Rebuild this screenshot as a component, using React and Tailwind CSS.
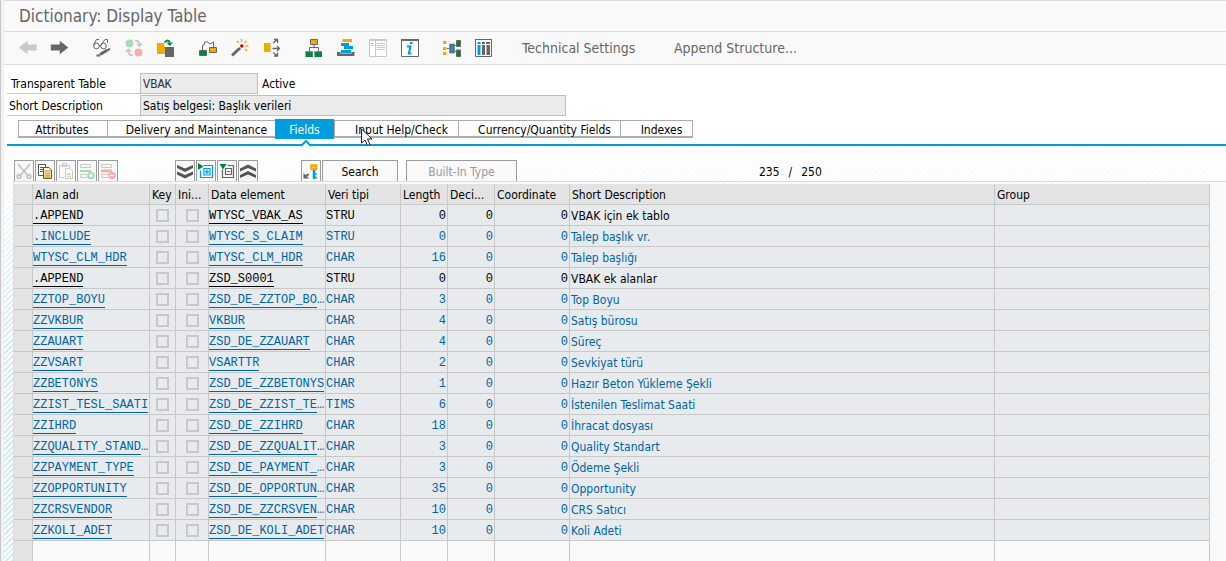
// App.jsx
import React from 'react';

const tabs = [
    { label: 'Attributes', width: 'w-[89px] pr-[2px]' },
    { label: 'Delivery and Maintenance', width: 'w-[168px] pl-[10px]' },
    { label: 'Fields', width: 'w-[59px]', active: true },
    { label: 'Input Help/Check', width: 'w-[124px] pl-[10px]' },
    { label: 'Currency/Quantity Fields', width: 'w-[162px] pl-[10px]' },
    { label: 'Indexes', width: 'w-[73px] pl-[10px]' },
];

const columns = [
    { label: '', width: 'w-[19px]' },
    { label: 'Alan adı', width: 'w-[117px]' },
    { label: 'Key', width: 'w-[26px]' },
    { label: 'Ini...', width: 'w-[33px]' },
    { label: 'Data element', width: 'w-[117px]' },
    { label: 'Veri tipi', width: 'w-[75px]' },
    { label: 'Length', width: 'w-[47px]' },
    { label: 'Deci...', width: 'w-[47px]' },
    { label: 'Coordinate', width: 'w-[75px]' },
    { label: 'Short Description', width: 'w-auto' },
    { label: 'Group', width: 'w-[215px]' },
];

// A trailing "…" marks a value that is cut off in its column
const rows = [
    { name: '.APPEND', element: 'WTYSC_VBAK_AS', type: 'STRU', length: 0, text: 'VBAK için ek tablo', black: true },
    { name: '.INCLUDE', element: 'WTYSC_S_CLAIM', type: 'STRU', length: 0, text: 'Talep başlık vr.' },
    { name: 'WTYSC_CLM_HDR', element: 'WTYSC_CLM_HDR', type: 'CHAR', length: 16, text: 'Talep başlığı' },
    { name: '.APPEND', element: 'ZSD_S0001', type: 'STRU', length: 0, text: 'VBAK ek alanlar', black: true },
    { name: 'ZZTOP_BOYU', element: 'ZSD_DE_ZZTOP_BO…', type: 'CHAR', length: 3, text: 'Top Boyu' },
    { name: 'ZZVKBUR', element: 'VKBUR', type: 'CHAR', length: 4, text: 'Satış bürosu' },
    { name: 'ZZAUART', element: 'ZSD_DE_ZZAUART', type: 'CHAR', length: 4, text: 'Süreç' },
    { name: 'ZZVSART', element: 'VSARTTR', type: 'CHAR', length: 2, text: 'Sevkiyat türü' },
    { name: 'ZZBETONYS', element: 'ZSD_DE_ZZBETONYS', type: 'CHAR', length: 1, text: 'Hazır Beton Yükleme Şekli' },
    { name: 'ZZIST_TESL_SAATI', element: 'ZSD_DE_ZZIST_TE…', type: 'TIMS', length: 6, text: 'İstenilen Teslimat Saati' },
    { name: 'ZZIHRD', element: 'ZSD_DE_ZZIHRD', type: 'CHAR', length: 18, text: 'İhracat dosyası' },
    { name: 'ZZQUALITY_STAND…', element: 'ZSD_DE_ZZQUALIT…', type: 'CHAR', length: 3, text: 'Quality Standart' },
    { name: 'ZZPAYMENT_TYPE', element: 'ZSD_DE_PAYMENT_…', type: 'CHAR', length: 3, text: 'Ödeme Şekli' },
    { name: 'ZZOPPORTUNITY', element: 'ZSD_DE_OPPORTUN…', type: 'CHAR', length: 35, text: 'Opportunity' },
    { name: 'ZZCRSVENDOR', element: 'ZSD_DE_ZZCRSVEN…', type: 'CHAR', length: 10, text: 'CRS Satıcı' },
    { name: 'ZZKOLI_ADET', element: 'ZSD_DE_KOLI_ADET', type: 'CHAR', length: 10, text: 'Koli Adeti' },
];

// Icons of the application toolbar, all on a 20x20 grid
const toolbarGroups = [
    [
        { title: 'Back', art: <path fill="#c9c9c9" d="M1 9.5 9.5 2.7V6.5H18.7V12.5H9.5V16.3z" /> },
        { title: 'Forward', art: <path fill="#666" d="M18.3 9.5 9.8 2.7V6.5H.8V12.5H9.8V16.3z" /> },
    ],
    [
        {
            title: 'Display / Change',
            art: (
                <g fill="none" stroke="#666">
                    <circle cx="4.5" cy="8" r="2.8" />
                    <circle cx="11.5" cy="8" r="2.8" />
                    <path d="M1.5 7 4.5 1.5H7M9 7 13 1.5H15.5V5M7.3 7.5H8.7" />
                    <path strokeWidth="3" d="M8 16.5 15.5 12" />
                    <path strokeWidth="2" d="M4.5 17.5H8M15.5 12.5 18 10.5" />
                </g>
            ),
        },
        {
            title: 'Active / Inactive',
            art: (
                <>
                    <circle cx="5.5" cy="5.5" r="4" fill="#a9d8ba" />
                    <circle cx="14.5" cy="14.5" r="4" fill="#eeb0b0" />
                    <path fill="none" stroke="#c9c9c9" strokeWidth="2" d="M11 2.8Q16 2.5 15.5 7M9 17.2Q4 17.5 4.5 13" />
                    <path fill="#c9c9c9" d="M12 5.5H19L15.5 9.5zM1 14H8L4.5 10z" />
                </>
            ),
        },
        {
            title: 'Other Object',
            art: (
                <>
                    <path fill="#f0ab00" d="M1 5H8V8H9V16H1z" />
                    <path fill="#666" d="M9 9H18V19H9z" />
                    <path fill="none" stroke="#00873c" strokeWidth="2" d="M8.5 4.5Q11 1 14 4" />
                    <path fill="#00873c" d="M10.5 4.5H17L13.7 8z" />
                </>
            ),
        },
    ],
    [
        {
            title: 'Where-Used List',
            art: (
                <g stroke="#666">
                    <path fill="none" d="M4.5 12V7.5L6.5 6.5V4.5L9 3.5 12 6 15.5 4V9.5" />
                    <path fill="#00873c" d="M1.5 12.5H8.5V17.5H1.5z" />
                    <path fill="#f0ab00" d="M11.5 9.5H18.5V14.5H11.5z" />
                </g>
            ),
        },
        {
            title: 'Activate',
            art: (
                <>
                    <path stroke="#666" strokeWidth="3" d="M2 17.5 10 10" />
                    <circle cx="11.8" cy="8" r="1.8" fill="#d00" />
                    <path stroke="#f0ab00" strokeWidth="1.4" d="M7 3 8.5 5M11.5 1V4M16.5 3 14.5 5M15.5 8H18.5M15 11 17 13" />
                </>
            ),
        },
        {
            title: 'Expand',
            art: (
                <>
                    <path fill="#f0ab00" d="M2 5H8.5V14H2z" />
                    <g fill="none" stroke="#666" strokeWidth="1.3">
                        <path d="M11 5 15 1.8M12 1.5H15.5V5M10.5 10.5H17M15 8 17.5 10.5 15 13M11 14.5 15 17.5M12 18H15.5V14.5" />
                    </g>
                </>
            ),
        },
    ],
    [
        {
            title: 'Hierarchy',
            art: (
                <>
                    <path fill="none" stroke="#666" d="M5.5 13V9.5H14.5V13M10 6V9.5" />
                    <path fill="#f0ab00" stroke="#666" d="M6.5 1.5H13.5V6.5H6.5z" />
                    <path fill="#00873c" d="M1.5 13.5H8.8V19H1.5zM10.5 13.5H18V19H10.5z" />
                    <path stroke="#666" d="M1.5 14H8.8M10.5 14H18" />
                </>
            ),
        },
        {
            title: 'Display Object List',
            art: (
                <>
                    <path fill="#f0ab00" d="M6.5 1H16V4H6.5z" />
                    <path fill="#009de0" d="M5 5H13V8H5zM8 8H17V11H8zM5 12H15V15H5z" />
                    <path fill="#666" d="M1 14H4.5V15.5H15.5V14H18.5V18H1z" />
                </>
            ),
        },
        {
            title: 'Layout',
            art: (
                <g fill="none" stroke="#c9c9c9">
                    <path fill="#fff" d="M1.5 2.5H18.5V18.5H1.5z" />
                    <path strokeWidth="2" d="M1 2H19" />
                    <path d="M7.5 3V18M3 5.5H6M3 7.5H6M9 5.5H17M9 7.5H17M9 9.5H17M9 11.5H17" />
                </g>
            ),
        },
        {
            title: 'Information',
            art: (
                <>
                    <path fill="#fff" stroke="#666" d="M1.5 2.5H18.5V18.5H1.5z" />
                    <path stroke="#666" strokeWidth="2" d="M1 2H19" />
                    <path fill="none" stroke="#009de0" strokeWidth="2" d="M7 8.5H10.5L8.8 15.5H11.5M10 5H12.5" />
                </>
            ),
        },
    ],
    [
        {
            title: 'Append',
            art: (
                <>
                    <path fill="#f0ab00" d="M1 3H4.5V6H1zM1 9H4.5V12H1zM1 14H4.5V17H1z" />
                    <path fill="#009de0" stroke="#666" strokeWidth="1.5" d="M8 6.5H12V14.5H8z" />
                    <path stroke="#666" d="M5 10.5H7M13 7.5H15M13 13.5H15" />
                    <path fill="#00873c" stroke="#666" d="M14.5 2.5H18.5V8.5H14.5zM14.5 12H18.5V18.5H14.5z" />
                </>
            ),
        },
        {
            title: 'Contents',
            art: (
                <>
                    <path fill="#fff" stroke="#666" d="M1.5 1.5H17.5V18.5H1.5z" />
                    <path fill="#666" d="M1 1H18V2H1zM8 4H11V6H8zM12 4H16V6H12zM8 7H11V17H8zM12.5 7H16V17H12.5z" />
                    <path fill="#009de0" d="M3.5 4H6.5V6H3.5zM3.5 7H6.5V17H3.5z" />
                </>
            ),
        },
    ],
];

// Icons of the grid toolbar, 18x20
const editButtons = [
    {
        title: 'Cut',
        art: (
            <g fill="none" stroke="#c4c4c4" strokeWidth="1.8">
                <path d="M3 3 13 15M15 3 5 15" />
                <circle cx="4" cy="15.5" r="1.8" />
                <circle cx="14" cy="15.5" r="1.8" />
            </g>
        ),
    },
    {
        title: 'Copy',
        art: (
            <>
                <path fill="#fff" stroke="#555" d="M2.5 3.5H9.5V14.5H2.5z" />
                <path stroke="#555" d="M4 6.5H8M4 8.5H8M4 10.5H8" />
                <path fill="#fff" stroke="#555" d="M7.5 6.5H13L15.5 9V17.5H7.5z" />
                <path stroke="#f0ab00" strokeWidth="1.6" d="M8.5 10H14.5M8.5 12.2H14.5M8.5 14.4H14.5M8.5 16.4H14.5" />
            </>
        ),
    },
    {
        title: 'Paste',
        art: (
            <g fill="none" stroke="#c9c9c9">
                <path d="M7 16.5H2.5V4.5H12.5V7M5.5 5.5V2.5H9.5V5.5z" />
                <path fill="#fff" d="M8.5 7.5H13L15.5 10V17.5H8.5z" />
                <path stroke="#f3d89a" strokeWidth="2" d="M10 13H14M10 15.5H14" />
            </g>
        ),
    },
    {
        title: 'Insert Row',
        art: (
            <>
                <path fill="none" stroke="#c9c9c9" d="M2.5 3.5H12.5V6.5H2.5zM9 16.5H2.5V13.5H9" />
                <path stroke="#a9d8ba" strokeWidth="2" d="M2 10H13" />
                <circle cx="13" cy="14.5" r="3.8" fill="#a9d8ba" />
                <path stroke="#fff" strokeWidth="1.3" d="M11 14.5H15M13 12.5V16.5" />
            </>
        ),
    },
    {
        title: 'Delete Row',
        art: (
            <>
                <path fill="none" stroke="#c9c9c9" d="M2.5 3.5H12.5V6.5H2.5zM9 16.5H2.5V13.5H9" />
                <path stroke="#eeb0b0" strokeWidth="3" d="M2 10H13" />
                <circle cx="13" cy="14.5" r="3.8" fill="#eeb0b0" />
                <path stroke="#fff" strokeWidth="1.3" d="M11 14.5H15" />
            </>
        ),
    },
];

const expandButtons = [
    { title: 'Expand All', art: <path fill="#555" d="M1 4 9 7.5 17 4V7L9 11 1 7zM1 10.5 9 14 17 10.5V13.5L9 17.5 1 13.5z" /> },
    {
        title: 'Expand Include',
        art: (
            <>
                <path fill="none" stroke="#009de0" strokeWidth="1.2" d="M6.5 4.5H15.5V16.5H3.5V9.5M7 7.5V14H13V7.5zM10 8.5V13M8 10.8H12" />
                <path fill="#00873c" d="M1 2 6.5 5.5 1 9z" />
            </>
        ),
    },
    {
        title: 'Collapse Include',
        art: (
            <>
                <path fill="none" stroke="#666" strokeWidth="1.2" d="M9.5 4.5H15.5V16.5H4.5V8.5M7.5 7.5H13.5V13.5H7.5zM9 10.5H12" />
                <path fill="#00873c" d="M1.5 3H8.5L5 8.5z" />
            </>
        ),
    },
    { title: 'Collapse All', art: <path fill="#555" d="M1 17 9 13.5 17 17V14L9 10 1 14zM1 10.5 9 7 17 10.5V7.5L9 3.5 1 7.5z" /> },
];

const ToolbarIcon = ({ title, art }) => (
    <button type="button" aria-label={title} className="h-5 w-5">
        <svg viewBox="0 0 20 20" className="h-5 w-5">{art}</svg>
    </button>
);

const GridButton = ({ title, art }) => (
    <button type="button" aria-label={title} className="h-[21px] w-5 border border-b-0 border-[#9c9c9c] bg-[#f9f9f9]">
        <svg viewBox="0 0 18 20" className="h-5 w-[18px]">{art}</svg>
    </button>
);

const FieldLink = ({ value }) => {
    const cut = value.endsWith('…');
    return (
        <>
            <a href="#field" className="inline-block h-4 border-b border-current">{cut ? value.slice(0, -1) : value}</a>
            {cut && '…'}
        </>
    );
};

const Cell = ({ className = '', children }) => (
    <td className={`overflow-hidden border-r border-b border-[#c8c8c8] p-0 ${className}`}>{children}</td>
);

const MonoCell = ({ className = '', children }) => (
    <Cell className={`pt-[2px] font-['Liberation_Mono',monospace] ${className}`}>{children}</Cell>
);

const FlagCell = ({ label }) => (
    <Cell>
        <input type="checkbox" disabled aria-label={label} className="mx-auto block size-[13px] appearance-none border-2 border-[#c8c8c8]" />
    </Cell>
);

const FieldRow = ({ row }) => (
    <tr className={`h-[21px] bg-[#e7ebee] ${row.black ? 'text-black' : 'text-[#0064a4]'}`}>
        <Cell className="bg-[#e3e3e3]" />
        <MonoCell><FieldLink value={row.name} /></MonoCell>
        <FlagCell label="Key" />
        <FlagCell label="Initial values" />
        <MonoCell><FieldLink value={row.element} /></MonoCell>
        <MonoCell>{row.type}</MonoCell>
        <MonoCell className="pr-px text-right">{row.length}</MonoCell>
        <MonoCell className="pr-px text-right">0</MonoCell>
        <MonoCell className="pr-px text-right">0</MonoCell>
        <Cell className="pt-[2px] pl-px">{row.text}</Cell>
        <Cell />
    </tr>
);

const App = () => {
    return (
        <div className="flex min-h-screen bg-[#f2f2f2] font-['DejaVu_Sans_Condensed','Noto_Sans',sans-serif] text-xs leading-4 text-black">
            <div className="w-1 shrink-0 border-l border-[#c8c8c8]" />
            <div className="min-w-0 flex-1 bg-white">
                {/* Title */}
                <header className="flex h-8 items-center border-y border-[#dcdcdc] bg-[#f9f9f9] pl-[15px]">
                    <h1 className="text-[17px] text-[#666]">Dictionary: Display Table</h1>
                </header>

                {/* Application toolbar */}
                <nav className="flex h-[33px] items-center border-b border-[#dcdcdc] bg-[#f9f9f9] pl-[14px] text-sm text-[#666]">
                    <div className="flex gap-[22px]">
                        {toolbarGroups.map((group, i) => (
                            <div key={i} className="flex gap-3">
                                {group.map((icon) => <ToolbarIcon key={icon.title} {...icon} />)}
                            </div>
                        ))}
                    </div>
                    <button type="button" className="ml-7 w-[110px] text-left whitespace-nowrap">Technical Settings</button>
                    <button type="button" className="ml-[42px] whitespace-nowrap">Append Structure...</button>
                </nav>

                {/* Table name and description */}
                <div className="flex flex-col gap-px pt-2 pl-[3px]">
                    <div className="flex h-[21px] items-center">
                        <label htmlFor="table-name" className="h-full w-[133px] border-b border-[#c8c8c8] pt-[3px] pl-1">Transparent Table</label>
                        <input id="table-name" readOnly value="VBAK" className="h-[21px] w-[118px] border border-[#bdbdbd] bg-[#ebebeb] px-[2px] pt-[2px] font-['Liberation_Mono',monospace] text-[#333]" />
                        <span className="pl-1">Active</span>
                    </div>
                    <div className="flex h-[21px] items-center">
                        <label htmlFor="table-text" className="h-full w-[133px] border-b border-[#c8c8c8] pt-[3px] pl-[2px]">Short Description</label>
                        <input id="table-text" readOnly value="Satış belgesi: Başlık verileri" className="h-[21px] w-[426px] border border-[#bdbdbd] bg-[#ebebeb] px-[2px]" />
                    </div>
                </div>

                {/* Tab strip */}
                <div className="relative ml-[3px] flex h-[30px] border-b-2 border-[#009de0] pt-[3px] pl-[11px]">
                    <div role="tablist" className="flex h-5 items-center">
                        {tabs.map((tab) => (
                            <button
                                key={tab.label}
                                type="button"
                                role="tab"
                                aria-selected={!!tab.active}
                                className={`relative whitespace-nowrap ${tab.width} ${tab.active
                                    ? 'h-5 bg-[#009de0] pt-[2px] text-white'
                                    : 'h-[18px] border border-r-0 border-b-2 border-[#adadad] bg-white pt-px last:border-r'}`}
                            >
                                {tab.label}
                                {tab.active && (
                                    <svg viewBox="0 0 12 7" className="absolute top-[21px] left-[25px] h-[7px] w-3">
                                        <path fill="#fff" stroke="#009de0" strokeWidth="2" d="M1 6 6 1 11 6" />
                                    </svg>
                                )}
                            </button>
                        ))}
                    </div>
                    {/* Mouse pointer */}
                    <svg viewBox="0 0 12 19" className="absolute top-[12px] left-[354px] h-[19px] w-3">
                        <path fill="#fff" stroke="#222" d="M.5 1V15L4 12 6.5 17.5 9 16.5 6.5 11H11z" />
                    </svg>
                </div>

                {/* Grid area with the striped background */}
                <div className="bg-[linear-gradient(to_bottom,#fff,#ffffff00_50%),repeating-linear-gradient(135deg,#fff_0px,#fff_2px,#d5eaf5_2px,#d5eaf5_4px)] pt-[14px]">
                    <div className="flex h-[21px] pl-[10px]">
                        <div className="flex gap-px">
                            {editButtons.map((b) => <GridButton key={b.title} {...b} />)}
                        </div>
                        <div className="ml-[57px] flex gap-px">
                            {expandButtons.map((b) => <GridButton key={b.title} {...b} />)}
                        </div>
                        <div className="ml-[43px] flex gap-px">
                            <GridButton
                                title="Foreign Keys"
                                art={(
                                    <>
                                        <path fill="none" stroke="#f0ab00" strokeWidth="2.5" d="M9.5 4.5H14V8H9.5z" />
                                        <path stroke="#009de0" strokeWidth="2.5" d="M12 9V18" />
                                        <path stroke="#009de0" strokeWidth="1.5" d="M12 13H15M12 16.5H15" />
                                        <path fill="#666" d="M1.5 12V17.5H7L5 15.5 7.5 13.5 6 12.5 3.5 14z" />
                                    </>
                                )}
                            />
                            <button type="button" className="w-[76px] border border-b-0 border-[#9c9c9c] bg-[#f9f9f9] pt-[2px]">Search</button>
                        </div>
                        <button type="button" disabled className="ml-2 w-[111px] border border-b-0 border-[#9c9c9c] bg-[#f9f9f9] pt-[2px] text-[#999]">Built-In Type</button>
                        <div className="ml-[242px] flex items-center gap-[9px] pt-[2px]">
                            <span>235</span>
                            <span>/</span>
                            <span>250</span>
                        </div>
                    </div>

                    <div className="ml-[9px] border-t border-l border-[#dcdcdc] bg-[#f9f9f9] pt-[2px] pr-4">
                        <table className="w-full table-fixed border-separate border-spacing-0">
                            <thead>
                                <tr className="h-[21px] bg-[#e3e3e3]">
                                    {columns.map((col, i) => (
                                        <th key={i} className={`${col.width} border-r border-b border-[#c8c8c8] p-0 pt-[2px] pl-[2px] text-left font-normal whitespace-nowrap`}>
                                            {col.label}
                                        </th>
                                    ))}
                                </tr>
                            </thead>
                            <tbody className="whitespace-nowrap">
                                {rows.map((row, i) => <FieldRow key={i} row={row} />)}
                                <tr className="h-5">
                                    {columns.map((col, i) => (
                                        <td key={i} className="border-r border-[#c8c8c8] p-0 first:bg-[#e3e3e3]" />
                                    ))}
                                </tr>
                            </tbody>
                        </table>
                    </div>
                </div>
            </div>
        </div>
    );
};

export default App;
